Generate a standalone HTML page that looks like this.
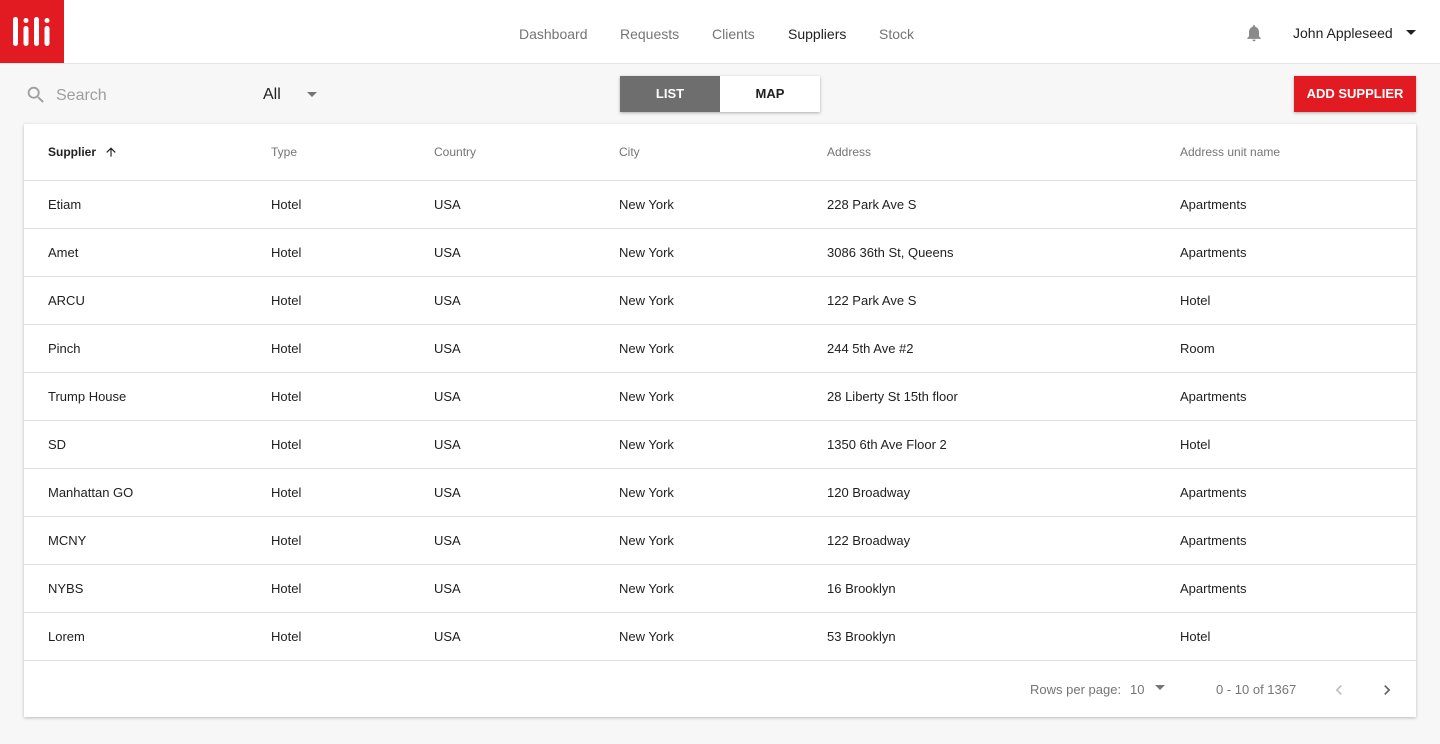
<!DOCTYPE html>
<html><head><meta charset="utf-8"><style>
*{box-sizing:border-box;margin:0;padding:0}
body{width:1440px;height:744px;background:#f7f7f7;font-family:"Liberation Sans",Roboto,sans-serif;position:relative;overflow:hidden;color:#212121}
.hdr{position:absolute;left:0;top:0;width:1440px;height:64px;background:#fff;border-bottom:1px solid #e4e4e4}
.logo{position:absolute;left:0;top:0;width:64px;height:63px;background:#e21b23}
.nav{position:absolute;top:26px;font-size:14px;color:#757575}
.user{position:absolute;left:1293px;top:25px;font-size:14px;color:#212121}
.abs{position:absolute}
.card{position:absolute;left:24px;top:124px;width:1392px;height:593px;background:#fff;box-shadow:0 1px 3px rgba(0,0,0,.25)}
.row{position:absolute;left:0;width:1392px;height:48px;border-bottom:1px solid #e0e0e0;font-size:13px;color:#212121}
.row span{position:absolute;top:16px}
.th{height:57px;font-size:12px;color:#757575}
.th span{top:21px}
</style></head><body>
<div class="hdr">
<div class="logo"><svg width="64" height="63"><g fill="#fff">
<rect x="13" y="17" width="5" height="29" rx="2.5"/>
<rect x="23.5" y="18" width="5" height="5" rx="2.5"/><rect x="23.5" y="26" width="5" height="20" rx="2.5"/>
<rect x="34" y="17" width="5" height="29" rx="2.5"/>
<rect x="44.5" y="18" width="5" height="5" rx="2.5"/><rect x="44.5" y="26" width="5" height="20" rx="2.5"/>
</g></svg></div>
<div class="nav" style="left:519px">Dashboard</div>
<div class="nav" style="left:620px">Requests</div>
<div class="nav" style="left:712px">Clients</div>
<div class="nav" style="left:788px;color:#212121">Suppliers</div>
<div class="nav" style="left:879px">Stock</div>
<svg class="abs" style="left:1244px;top:23px" width="20" height="20" viewBox="0 0 24 24"><path fill="#8a8a8a" d="M12 22c1.1 0 2-.9 2-2h-4c0 1.1.9 2 2 2zm6-6v-5c0-3.07-1.63-5.64-4.5-6.32V4c0-.83-.67-1.5-1.5-1.5s-1.5.67-1.5 1.5v.68C7.640 5.36 6 7.920 6 11v5l-2 2v1h16v-1l-2-2z"/></svg>
<div class="user">John Appleseed</div>
<svg class="abs" style="left:1405px;top:29px" width="12" height="8"><path d="M1 1h10L6 6z" fill="#212121"/></svg>
</div>
<svg class="abs" style="left:25px;top:84px" width="22" height="22" viewBox="0 0 24 24"><path fill="#9e9e9e" d="M15.5 14h-.79l-.28-.27A6.47 6.47 0 0016 9.5 6.5 6.5 0 109.5 16c1.61 0 3.090-.59 4.230-1.57l.27.28v.79l5 4.990L20.49 19l-4.990-5zm-6 0C7.010 14 5 11.990 5 9.5S7.010 5 9.5 5 14 7.010 14 9.5 11.990 14 9.5 14z"/></svg>
<div class="abs" style="left:56px;top:87px;font-size:16px;color:#9e9e9e">Search</div>
<div class="abs" style="left:263px;top:86px;font-size:16px;color:#212121">All</div>
<svg class="abs" style="left:307px;top:92px" width="12" height="7"><path d="M0 0h10L5 5z" fill="#757575"/></svg>
<div class="abs" style="left:620px;top:76px;width:200px;height:36px;box-shadow:0 1px 3px rgba(0,0,0,.3);background:#fff;font-size:13px;font-weight:bold">
<div class="abs" style="left:0;top:0;width:100px;height:36px;background:#6e6e6e;color:#fff;text-align:center;line-height:35px">LIST</div>
<div class="abs" style="left:100px;top:0;width:100px;height:36px;color:#212121;text-align:center;line-height:35px">MAP</div>
</div>
<div class="abs" style="left:1294px;top:76px;width:122px;height:36px;background:#e21b23;color:#fff;font-size:13px;font-weight:bold;text-align:center;line-height:35px;box-shadow:0 1px 3px rgba(0,0,0,.3)">ADD SUPPLIER</div>
<div class="card">
<div class="row th" style="top:0"><span style="left:24px;color:#212121;font-weight:bold">Supplier</span>
<svg class="abs" style="left:80px;top:21px" width="14" height="14" viewBox="0 0 24 24"><path fill="#212121" d="M4 12l1.41 1.41L11 7.83V20h2V7.83l5.58 5.59L20 12l-8-8-8 8z"/></svg>
<span style="left:247px">Type</span><span style="left:410px">Country</span><span style="left:595px">City</span><span style="left:803px">Address</span><span style="left:1156px">Address unit name</span></div>
<div class="row" style="top:57px"><span style="left:24px">Etiam</span><span style="left:247px">Hotel</span><span style="left:410px">USA</span><span style="left:595px">New York</span><span style="left:803px">228 Park Ave S</span><span style="left:1156px">Apartments</span></div>
<div class="row" style="top:105px"><span style="left:24px">Amet</span><span style="left:247px">Hotel</span><span style="left:410px">USA</span><span style="left:595px">New York</span><span style="left:803px">3086 36th St, Queens</span><span style="left:1156px">Apartments</span></div>
<div class="row" style="top:153px"><span style="left:24px">ARCU</span><span style="left:247px">Hotel</span><span style="left:410px">USA</span><span style="left:595px">New York</span><span style="left:803px">122 Park Ave S</span><span style="left:1156px">Hotel</span></div>
<div class="row" style="top:201px"><span style="left:24px">Pinch</span><span style="left:247px">Hotel</span><span style="left:410px">USA</span><span style="left:595px">New York</span><span style="left:803px">244 5th Ave #2</span><span style="left:1156px">Room</span></div>
<div class="row" style="top:249px"><span style="left:24px">Trump House</span><span style="left:247px">Hotel</span><span style="left:410px">USA</span><span style="left:595px">New York</span><span style="left:803px">28 Liberty St 15th floor</span><span style="left:1156px">Apartments</span></div>
<div class="row" style="top:297px"><span style="left:24px">SD</span><span style="left:247px">Hotel</span><span style="left:410px">USA</span><span style="left:595px">New York</span><span style="left:803px">1350 6th Ave Floor 2</span><span style="left:1156px">Hotel</span></div>
<div class="row" style="top:345px"><span style="left:24px">Manhattan GO</span><span style="left:247px">Hotel</span><span style="left:410px">USA</span><span style="left:595px">New York</span><span style="left:803px">120 Broadway</span><span style="left:1156px">Apartments</span></div>
<div class="row" style="top:393px"><span style="left:24px">MCNY</span><span style="left:247px">Hotel</span><span style="left:410px">USA</span><span style="left:595px">New York</span><span style="left:803px">122 Broadway</span><span style="left:1156px">Apartments</span></div>
<div class="row" style="top:441px"><span style="left:24px">NYBS</span><span style="left:247px">Hotel</span><span style="left:410px">USA</span><span style="left:595px">New York</span><span style="left:803px">16 Brooklyn</span><span style="left:1156px">Apartments</span></div>
<div class="row" style="top:489px"><span style="left:24px">Lorem</span><span style="left:247px">Hotel</span><span style="left:410px">USA</span><span style="left:595px">New York</span><span style="left:803px">53 Brooklyn</span><span style="left:1156px">Hotel</span></div>
<div class="abs" style="left:1006px;top:558px;font-size:13px;color:#757575">Rows per page:</div>
<div class="abs" style="left:1106px;top:558px;font-size:13px;color:#757575">10</div>
<svg class="abs" style="left:1131px;top:561px" width="12" height="7"><path d="M0 0h10L5 5z" fill="#757575"/></svg>
<div class="abs" style="left:1192px;top:558px;font-size:13px;color:#757575">0 - 10 of 1367</div>
<svg class="abs" style="left:1305px;top:556px" width="20" height="20" viewBox="0 0 24 24"><path fill="#bdbdbd" d="M15.41 7.41L14 6l-6 6 6 6 1.41-1.41L10.83 12z"/></svg>
<svg class="abs" style="left:1353px;top:556px" width="20" height="20" viewBox="0 0 24 24"><path fill="#616161" d="M10 6L8.59 7.41 13.17 12l-4.58 4.59L10 18l6-6z"/></svg>
</div>
</body></html>
